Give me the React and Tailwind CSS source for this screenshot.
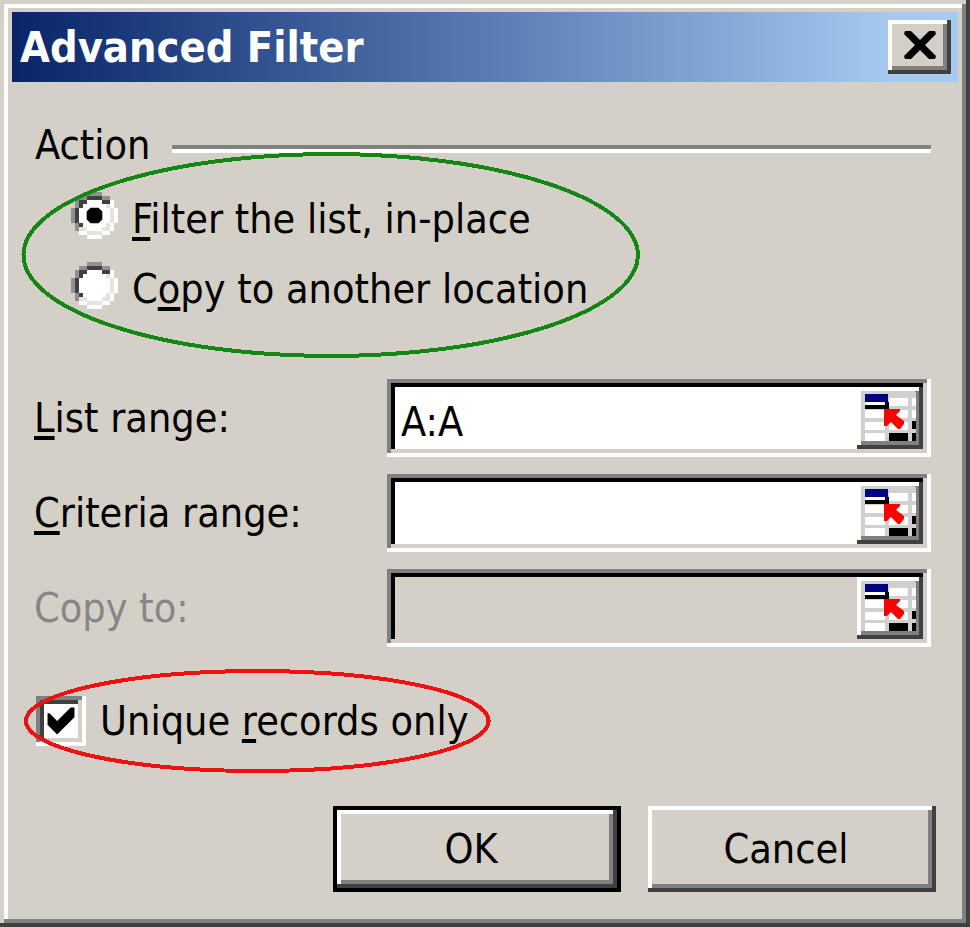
import React, { useState } from "react";

// Classic 12x12 radio bitmap: G shadow, D dark shadow, W white, L face
const RADIO_ROWS = [
  "....GGGG....",
  "..GGDDDDGG..",
  ".GDDWWWWDDW.",
  ".GDWWWWWWLW.",
  "GDWWWWWWWWLW",
  "GDWWWWWWWWLW",
  "GDWWWWWWWWLW",
  "GDWWWWWWWWLW",
  ".GDWWWWWWLW.",
  ".GLLWWWWLLW.",
  "..WWLLLLWW..",
  "....WWWW....",
];

const PIXEL_COLORS = {
  G: "#909090",
  D: "#404040",
  W: "#ffffff",
  L: "#e6e3de",
};

const Mnemonic = ({ children }) => (
  <u className="underline decoration-4 underline-offset-4 [text-decoration-skip-ink:none]">
    {children}
  </u>
);

const RadioOption = ({ value, checked, onChange, children }) => (
  <label className="flex h-[70px] items-center gap-3.5 whitespace-nowrap">
    <span className="mb-2 grid h-[47px] w-[47px] shrink-0">
      <input
        type="radio"
        name="action"
        value={value}
        checked={checked}
        onChange={onChange}
        className="col-start-1 row-start-1 appearance-none outline-none"
      />
      <svg
        viewBox="0 0 12 12"
        className="pointer-events-none col-start-1 row-start-1 h-full w-full"
        aria-hidden="true"
      >
        <g shapeRendering="crispEdges">
          {RADIO_ROWS.map((row, y) =>
            row
              .split("")
              .map((c, x) =>
                c === "." ? null : (
                  <rect
                    key={`${x}-${y}`}
                    x={x}
                    y={y}
                    width="1"
                    height="1"
                    fill={PIXEL_COLORS[c]}
                  />
                )
              )
          )}
        </g>
        {checked && (
          <path d="M5 4h2l1 1v2l-1 1h-2l-1-1v-2z" fill="#000" />
        )}
      </svg>
    </span>
    <span>{children}</span>
  </label>
);

const RangePicker = ({ label }) => (
  <button
    type="button"
    aria-label={label}
    className="w-[66px] shrink-0 bg-[#d4d0c8] shadow-[inset_-4px_-4px_0_#404040,inset_4px_4px_0_#fff,inset_-8px_-8px_0_#808080]"
  >
    <svg viewBox="0 0 66 62" className="h-full w-full" aria-hidden="true">
      <rect x="6" y="5" width="53" height="49" fill="#d0d0d0" />
      <g fill="#fff">
        <rect x="8" y="15" width="20" height="4" />
        <rect x="8" y="23" width="20" height="8" />
        <rect x="8" y="35" width="20" height="8" />
        <rect x="8" y="46" width="20" height="8" />
        <rect x="32" y="11" width="19" height="8" />
        <rect x="32" y="23" width="19" height="8" />
        <rect x="32" y="35" width="19" height="8" />
        <rect x="55" y="11" width="4" height="8" />
        <rect x="55" y="23" width="4" height="8" />
      </g>
      <rect x="8" y="7" width="23" height="8" fill="#000080" />
      <path d="M28 15h4v8h-4v-1h-20v-4h20z" fill="#000" />
      <g fill="#000">
        <rect x="32" y="46" width="19" height="8" />
        <rect x="55" y="34" width="4" height="8" />
        <rect x="55" y="46" width="4" height="8" />
      </g>
      <path d="M27 22h16v2l-4 4 8 6v3l-4 5h-2l-7-7-4 4h-3z" fill="#f00" />
    </svg>
  </button>
);

const RangeField = ({ id, label, name, value, onChange, disabled }) => (
  <div className="grid grid-cols-[353px_minmax(0,1fr)] items-center">
    <label htmlFor={id} className={disabled ? "text-[#868686]" : ""}>
      {label}
    </label>
    <div
      className={`flex h-[78px] p-2 shadow-[inset_-4px_-4px_0_#fff,inset_4px_4px_0_#808080,inset_-8px_-8px_0_#d4d0c8,inset_8px_8px_0_#000] ${
        disabled ? "bg-[#d4d0c8]" : "bg-white"
      }`}
    >
      <input
        id={id}
        type="text"
        value={value}
        disabled={disabled}
        onChange={onChange}
        className="min-w-0 flex-1 bg-transparent px-1.5 pt-2 outline-none"
      />
      <RangePicker label={`Select ${name}`} />
    </div>
  </div>
);

const Ring = ({ color }) => (
  <svg
    viewBox="0 0 100 100"
    preserveAspectRatio="none"
    className="pointer-events-none absolute inset-0 h-full w-full overflow-visible"
    aria-hidden="true"
  >
    <ellipse
      cx="50"
      cy="50"
      rx="49.6"
      ry="49"
      fill="none"
      stroke={color}
      strokeWidth="4"
      vectorEffect="non-scaling-stroke"
      shapeRendering="crispEdges"
    />
  </svg>
);

const App = () => {
  const [action, setAction] = useState("filter");
  const [listRange, setListRange] = useState("A:A");
  const [criteriaRange, setCriteriaRange] = useState("");
  const [copyTo, setCopyTo] = useState("");
  const [unique, setUnique] = useState(true);

  return (
    <div className="min-h-screen w-full bg-[#d4d0c8] p-3 font-['DejaVu_Sans_Condensed','Noto_Sans',sans-serif] text-[41px] leading-[52px] text-black shadow-[inset_-4px_-4px_0_#404040,inset_4px_4px_0_#d4d0c8,inset_-8px_-8px_0_#808080,inset_8px_8px_0_#fff]">
      {/* Title bar */}
      <header className="flex h-[70px] items-center justify-between bg-linear-to-r from-[#0a246a] to-[#a6caf0] to-93% pr-[7px] pl-2">
        <h1 className="text-[43px] font-bold text-white">Advanced Filter</h1>
        <button
          type="button"
          aria-label="Close"
          className="flex h-[54px] w-[63px] items-center justify-center bg-[#d4d0c8] pb-1 shadow-[inset_-4px_-4px_0_#404040,inset_4px_4px_0_#fff,inset_-8px_-8px_0_#808080]"
        >
          <svg viewBox="0 0 32 28" className="h-7 w-8" aria-hidden="true">
            <path
              d="M1 0h6l9 9 9-9h6l1 3-11 11 11 11-1 3h-6l-9-9-9 9h-6l-1-3 11-11-11-11z"
              fill="#000"
            />
          </svg>
        </button>
      </header>

      <form onSubmit={(e) => e.preventDefault()}>
        {/* Action */}
        <fieldset className="pt-[37px]">
          <div className="flex items-center gap-[22px] pr-[27px] pl-[23px]">
            <span>Action</span>
            <span className="mt-2 h-2 flex-1 border-t-4 border-b-4 border-t-[#808080] border-b-white" />
          </div>
          <div className="relative -mt-[19px] ml-[9px] w-fit pt-8 pr-[52px] pb-[34px] pl-[50px]">
            <RadioOption
              value="filter"
              checked={action === "filter"}
              onChange={() => setAction("filter")}
            >
              <Mnemonic>F</Mnemonic>ilter the list, in-place
            </RadioOption>
            <RadioOption
              value="copy"
              checked={action === "copy"}
              onChange={() => setAction("copy")}
            >
              C<Mnemonic>o</Mnemonic>py to another location
            </RadioOption>
            <Ring color="#138613" />
          </div>
        </fieldset>

        {/* Ranges */}
        <div className="mt-[21px] flex flex-col gap-[17px] pr-[27px] pl-[22px]">
          <RangeField
            id="listRange"
            name="list range"
            label={
              <>
                <Mnemonic>L</Mnemonic>ist range:
              </>
            }
            value={listRange}
            onChange={(e) => setListRange(e.target.value)}
          />
          <RangeField
            id="criteriaRange"
            name="criteria range"
            label={
              <>
                <Mnemonic>C</Mnemonic>riteria range:
              </>
            }
            value={criteriaRange}
            onChange={(e) => setCriteriaRange(e.target.value)}
          />
          <RangeField
            id="copyTo"
            name="copy destination"
            label="Copy to:"
            value={copyTo}
            onChange={(e) => setCopyTo(e.target.value)}
            disabled={action !== "copy"}
          />
        </div>

        {/* Unique records */}
        <div className="relative mt-[23px] ml-3 flex h-[102px] w-fit items-center pr-[22px] pl-3">
          <label className="flex items-center gap-3.5 whitespace-nowrap">
            <span className="grid h-[50px] w-[50px] shrink-0 bg-white shadow-[inset_-4px_-4px_0_#fff,inset_4px_4px_0_#808080,inset_-8px_-8px_0_#d4d0c8,inset_8px_8px_0_#404040]">
              <input
                type="checkbox"
                checked={unique}
                onChange={(e) => setUnique(e.target.checked)}
                className="col-start-1 row-start-1 appearance-none outline-none"
              />
              {unique && (
                <svg
                  viewBox="0 0 26 26"
                  className="pointer-events-none col-start-1 row-start-1 h-full w-full"
                  aria-hidden="true"
                >
                  <path d="M6 9h1l4 4 7-7h2v5l-9 9-5-5z" fill="#000" />
                </svg>
              )}
            </span>
            <span>
              Unique <Mnemonic>r</Mnemonic>ecords only
            </span>
          </label>
          <Ring color="#ee1111" />
        </div>

        {/* Buttons */}
        <div className="mt-[34px] flex justify-end gap-[27px] pr-[22px] pb-[23px]">
          <button
            type="submit"
            className="h-[86px] w-72 border-4 border-black pr-3 shadow-[inset_-4px_-4px_0_#404040,inset_4px_4px_0_#fff,inset_-8px_-8px_0_#808080]"
          >
            OK
          </button>
          <button
            type="button"
            className="h-[86px] w-72 pr-3 shadow-[inset_-4px_-4px_0_#404040,inset_4px_4px_0_#fff,inset_-8px_-8px_0_#808080]"
          >
            Cancel
          </button>
        </div>
      </form>
    </div>
  );
};

export default App;
